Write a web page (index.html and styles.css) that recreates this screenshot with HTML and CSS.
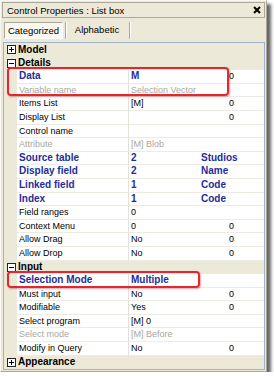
FILE: index.html
```html
<!DOCTYPE html>
<html lang="en">

<head>
    <meta charset="UTF-8">
    <title>Control Properties</title>
    <link rel="stylesheet" href="styles.css">
</head>

<body>
    <div class="window">
        <div class="titlebar">
            <span>Control Properties : List box</span>
            <svg class="close" width="8" height="8" viewBox="0 0 8 8">
                <path d="M1 1L7 7M7 1L1 7" stroke="#000" stroke-width="2" />
            </svg>
        </div>
        <div class="toolbar">
            <div class="tab active">Categorized</div>
            <div class="sep"></div>
            <div class="tab">Alphabetic</div>
            <div class="sep"></div>
        </div>

        <div class="grid">
            <div class="row cat"><span class="toggle plus"></span>Model</div>
            <div class="row cat"><span class="toggle"></span>Details</div>
            <div class="row"><i></i><div class="name blue">Data</div><div class="val"><span class="v blue">M</span><span class="x n">0</span></div></div>
            <div class="row"><i></i><div class="name gray">Variable name</div><div class="val"><span class="v gray">Selection Vector</span></div></div>
            <div class="row"><i></i><div class="name">Items List</div><div class="val"><span class="v">[M]</span><span class="x n">0</span></div></div>
            <div class="row"><i></i><div class="name">Display List</div><div class="val"><span class="v"></span><span class="x n">0</span></div></div>
            <div class="row"><i></i><div class="name">Control name</div><div class="val"></div></div>
            <div class="row"><i></i><div class="name gray">Attribute</div><div class="val"><span class="v gray">[M] Blob</span></div></div>
            <div class="row"><i></i><div class="name blue">Source table</div><div class="val"><span class="v blue">2</span><span class="x blue">Studios</span></div></div>
            <div class="row"><i></i><div class="name blue">Display field</div><div class="val"><span class="v blue">2</span><span class="x blue">Name</span></div></div>
            <div class="row"><i></i><div class="name blue">Linked field</div><div class="val"><span class="v blue">1</span><span class="x blue">Code</span></div></div>
            <div class="row"><i></i><div class="name blue">Index</div><div class="val"><span class="v blue">1</span><span class="x blue">Code</span></div></div>
            <div class="row"><i></i><div class="name">Field ranges</div><div class="val"><span class="v">0</span></div></div>
            <div class="row"><i></i><div class="name">Context Menu</div><div class="val"><span class="v">0</span><span class="x n">0</span></div></div>
            <div class="row"><i></i><div class="name">Allow Drag</div><div class="val"><span class="v">No</span><span class="x n">0</span></div></div>
            <div class="row"><i></i><div class="name">Allow Drop</div><div class="val"><span class="v">No</span><span class="x n">0</span></div></div>
            <div class="row cat"><span class="toggle"></span>Input</div>
            <div class="row"><i></i><div class="name blue">Selection Mode</div><div class="val"><span class="v blue">Multiple</span></div></div>
            <div class="row"><i></i><div class="name">Must input</div><div class="val"><span class="v">No</span><span class="x n">0</span></div></div>
            <div class="row"><i></i><div class="name">Modifiable</div><div class="val"><span class="v">Yes</span><span class="x n">0</span></div></div>
            <div class="row"><i></i><div class="name">Select program</div><div class="val"><span class="v">[M] 0</span></div></div>
            <div class="row"><i></i><div class="name gray">Select mode</div><div class="val"><span class="v gray">[M] Before</span></div></div>
            <div class="row"><i></i><div class="name">Modify in Query</div><div class="val"><span class="v">No</span><span class="x n">0</span></div></div>
            <div class="row cat"><span class="toggle plus"></span>Appearance</div>

            <!-- highlight marks -->
            <div class="mark mark-data"></div>
            <div class="mark mark-mode"></div>
        </div>
    </div>
</body>

</html>
```

FILE: styles.css
```css
* {
    margin: 0;
    padding: 0;
    box-sizing: border-box;
}

body {
    background-color: #ffffff;
    font-family: "Liberation Sans", Arial, sans-serif;
    font-size: 9px;
    color: #000000;
}

.window {
    width: 267px;
    padding: 1px 1px 1px 1px;
    background-color: #ECE9D8;
    border: 1px solid #F7F6F0;
    border-right-color: #ACA899;
    border-bottom-color: #ACA899;
    box-shadow: 4px 4px 3px rgba(0, 0, 0, .6);
}

.titlebar {
    display: flex;
    align-items: center;
    justify-content: space-between;
    height: 16px;
    padding: 0 3px 0 4px;
    border: 1px solid #ACA899;
    font-size: 9.5px;
}

.toolbar {
    display: flex;
    align-items: center;
    height: 24px;
    padding-left: 2px;
    font-size: 9.5px;
}

.tab {
    width: 60px;
    height: 17px;
    line-height: 15px;
    text-align: center;
}

.tab.active {
    width: 59px;
    background-color: #F8F7F2;
    border: 1px solid;
    border-color: #ACA899 #ffffff #ffffff #ACA899;
}

.sep {
    width: 2px;
    height: 17px;
    margin: 0 0 0 2px;
    border-left: 1px solid #ACA899;
    border-right: 1px solid #ffffff;
}

.grid {
    position: relative;
    width: 262px;
    margin-left: 1px;
    border: 1px solid #9FB2C7;
    background-color: #ffffff;
}

.row {
    display: grid;
    grid-template-columns: 13px 112px 135px;
    height: 13.6px;
    line-height: 12.6px;
}

.row i {
    background-color: #ECE9D8;
}

.name,
.val {
    border-bottom: 1px solid #EDECE4;
    white-space: nowrap;
    overflow: hidden;
}

.name {
    padding-left: 2px;
    border-right: 1px solid #E4E2D8;
}

.val {
    display: flex;
    padding-left: 2px;
}

.v {
    width: 70px;
}

.x.n {
    padding-left: 28px;
}

.blue {
    color: #1E2D9C;
    font-weight: bold;
    font-size: 10px;
}

.gray {
    color: #A9A7A0;
}

.row.cat {
    display: flex;
    align-items: center;
    background-color: #ECE9D8;
    font-weight: bold;
    font-size: 10px;
}

.toggle {
    position: relative;
    width: 9px;
    height: 9px;
    margin: 0 2px 0 3px;
    border: 1px solid #222222;
    background-color: #ffffff;
}

.toggle::before {
    content: "";
    position: absolute;
    left: 1px;
    top: 3px;
    width: 5px;
    height: 1px;
    background-color: #000000;
}

.toggle.plus::after {
    content: "";
    position: absolute;
    left: 3px;
    top: 1px;
    width: 1px;
    height: 5px;
    background-color: #000000;
}

.mark {
    position: absolute;
    left: 3px;
    border: 2px solid #E5262C;
    border-radius: 4px;
    box-shadow: 1px 1px 2px rgba(120, 0, 0, .35);
}

.mark-data {
    top: 24px;
    width: 222px;
    height: 29px;
}

.mark-mode {
    top: 228px;
    width: 193px;
    height: 17px;
}
```
